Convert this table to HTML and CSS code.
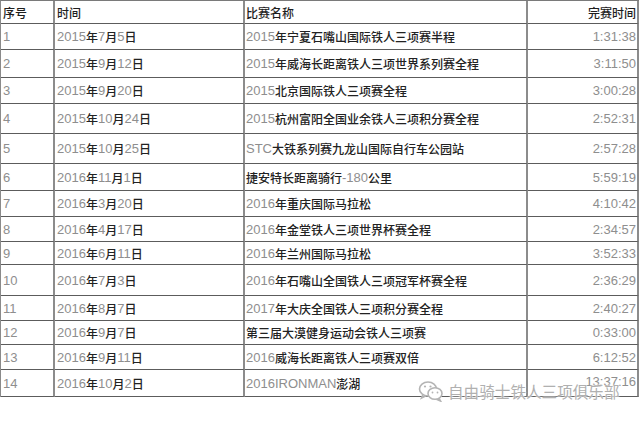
FILE: index.html
```html
<!DOCTYPE html>
<html lang="zh">
<head>
<meta charset="utf-8">
<title>比赛记录</title>
<link rel="stylesheet" href="styles.css">
</head>
<body>
<div class="page">
  <div class="sheet">
    <div class="c h c1">序号</div><div class="c h c2">时间</div><div class="c h c3">比赛名称</div><div class="c h c4">完赛时间</div>

    <div class="c c1"><span class="n">1</span></div><div class="c c2"><span class="n">2015</span>年<span class="n">7</span>月<span class="n">5</span>日</div><div class="c c3"><span class="n">2015</span>年宁夏石嘴山国际铁人三项赛半程</div><div class="c c4"><span class="n">1:31:38</span></div>

    <div class="c c1"><span class="n">2</span></div><div class="c c2"><span class="n">2015</span>年<span class="n">9</span>月<span class="n">12</span>日</div><div class="c c3"><span class="n">2015</span>年威海长距离铁人三项世界系列赛全程</div><div class="c c4"><span class="n">3:11:50</span></div>

    <div class="c c1"><span class="n">3</span></div><div class="c c2"><span class="n">2015</span>年<span class="n">9</span>月<span class="n">20</span>日</div><div class="c c3"><span class="n">2015</span>北京国际铁人三项赛全程</div><div class="c c4"><span class="n">3:00:28</span></div>

    <div class="c c1"><span class="n">4</span></div><div class="c c2"><span class="n">2015</span>年<span class="n">10</span>月<span class="n">24</span>日</div><div class="c c3"><span class="n">2015</span>杭州富阳全国业余铁人三项积分赛全程</div><div class="c c4"><span class="n">2:52:31</span></div>

    <div class="c c1"><span class="n">5</span></div><div class="c c2"><span class="n">2015</span>年<span class="n">10</span>月<span class="n">25</span>日</div><div class="c c3"><span class="n">STC</span>大铁系列赛九龙山国际自行车公园站</div><div class="c c4"><span class="n">2:57:28</span></div>

    <div class="c c1"><span class="n">6</span></div><div class="c c2"><span class="n">2016</span>年<span class="n">11</span>月<span class="n">1</span>日</div><div class="c c3">捷安特长距离骑行<span class="n">-180</span>公里</div><div class="c c4"><span class="n">5:59:19</span></div>

    <div class="c c1"><span class="n">7</span></div><div class="c c2"><span class="n">2016</span>年<span class="n">3</span>月<span class="n">20</span>日</div><div class="c c3"><span class="n">2016</span>年重庆国际马拉松</div><div class="c c4"><span class="n">4:10:42</span></div>

    <div class="c c1"><span class="n">8</span></div><div class="c c2"><span class="n">2016</span>年<span class="n">4</span>月<span class="n">17</span>日</div><div class="c c3"><span class="n">2016</span>年金堂铁人三项世界杯赛全程</div><div class="c c4"><span class="n">2:34:57</span></div>

    <div class="c c1"><span class="n">9</span></div><div class="c c2"><span class="n">2016</span>年<span class="n">6</span>月<span class="n">11</span>日</div><div class="c c3"><span class="n">2016</span>年兰州国际马拉松</div><div class="c c4"><span class="n">3:52:33</span></div>

    <div class="c c1"><span class="n">10</span></div><div class="c c2"><span class="n">2016</span>年<span class="n">7</span>月<span class="n">3</span>日</div><div class="c c3"><span class="n">2016</span>年石嘴山全国铁人三项冠军杯赛全程</div><div class="c c4"><span class="n">2:36:29</span></div>

    <div class="c c1"><span class="n">11</span></div><div class="c c2"><span class="n">2016</span>年<span class="n">8</span>月<span class="n">7</span>日</div><div class="c c3"><span class="n">2017</span>年大庆全国铁人三项积分赛全程</div><div class="c c4"><span class="n">2:40:27</span></div>

    <div class="c c1"><span class="n">12</span></div><div class="c c2"><span class="n">2016</span>年<span class="n">9</span>月<span class="n">7</span>日</div><div class="c c3">第三届大漠健身运动会铁人三项赛</div><div class="c c4"><span class="n">0:33:00</span></div>

    <div class="c c1"><span class="n">13</span></div><div class="c c2"><span class="n">2016</span>年<span class="n">9</span>月<span class="n">11</span>日</div><div class="c c3"><span class="n">2016</span>威海长距离铁人三项赛双倍</div><div class="c c4"><span class="n">6:12:52</span></div>

    <div class="c c1"><span class="n">14</span></div><div class="c c2"><span class="n">2016</span>年<span class="n">10</span>月<span class="n">2</span>日</div><div class="c c3"><span class="n">2016IRONMAN</span>澎湖</div><div class="c c4 last"><span class="n">13:37:16</span></div>
  </div>

  <div class="watermark">
    <svg class="wm-icon" width="26" height="22" viewBox="0 0 26 22">
      <g fill="none" stroke="#b4b4b4" stroke-width="1.6">
        <ellipse cx="10" cy="9" rx="8.5" ry="7"/>
        <path d="M5 14.5 L3.5 18 L8 15.8"/>
        <ellipse cx="17" cy="13.5" rx="7" ry="5.8" fill="#fff"/>
        <path d="M21 18.5 L22.5 21 L18.5 19.2"/>
      </g>
      <g fill="#b4b4b4">
        <circle cx="7" cy="6.5" r="1.1"/>
        <circle cx="12.5" cy="6.5" r="1.1"/>
        <circle cx="14.5" cy="12.5" r="0.9"/>
        <circle cx="19.5" cy="12.5" r="0.9"/>
      </g>
    </svg>
    <span class="wm-text">自由骑士铁人三项俱乐部</span>
  </div>
</div>
</body>
</html>
```

FILE: styles.css
```css
html, body {
  margin: 0;
  padding: 0;
  background: #ffffff;
}

.page {
  position: relative;
  width: 640px;
  height: 421px;
  font-family: "Liberation Sans", "Noto Sans CJK SC", sans-serif;
}

.sheet {
  display: grid;
  grid-template-columns: 54px 190px 283px 111px;
  grid-template-rows: 23px 26px 28px 26px 30px 30px 27px 26px 25px 23px 31px 25px 24px 25px 27px;
  border-left: 1px solid #8a8a8a;
  border-top: 1px solid #7a7a7a;
  width: 638px;
}

.c {
  box-sizing: border-box;
  display: flex;
  align-items: center;
  border-right: 2px solid #8c8c8c;
  border-bottom: 1px solid #5c5c5c;
  font-family: "Noto Sans CJK SC", sans-serif;
  font-size: 12px;
  font-weight: 500;
  color: #222222;
  white-space: nowrap;
  overflow: hidden;
  padding-left: 2px;
}

.c3 {
  padding-left: 1px;
}

.c4 {
  justify-content: flex-end;
  padding-left: 0;
  padding-right: 1px;
}

.last {
  align-items: flex-start;
  padding-top: 4px;
}

.h {
  color: #1e1e1e;
}

.n {
  font-family: "Liberation Sans", sans-serif;
  font-size: 13px;
  font-weight: 400;
  color: #8e8e8e;
}

.watermark {
  position: absolute;
  left: 418px;
  top: 380px;
  display: flex;
  align-items: center;
  gap: 4px;
}

.wm-icon {
  display: block;
}

.wm-text {
  font-family: "Noto Sans CJK SC", sans-serif;
  font-size: 15.6px;
  color: #b0b0b0;
  text-shadow: 0 0 2px #ffffff, 0 0 2px #ffffff;
  line-height: 20px;
}
```
